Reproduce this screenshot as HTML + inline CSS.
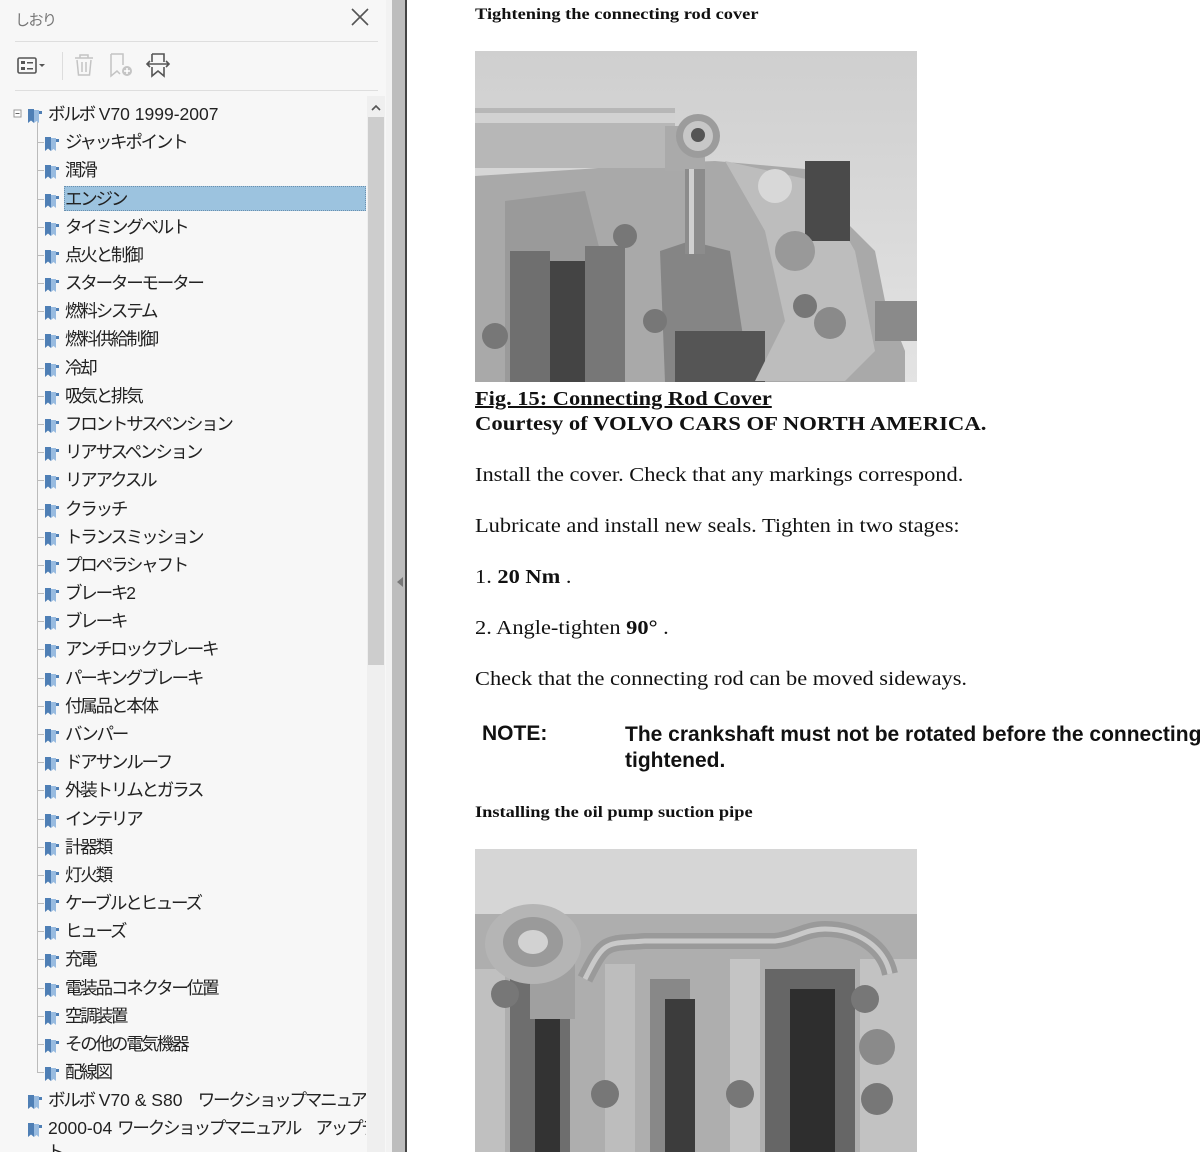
<!DOCTYPE html>
<html><head><meta charset="utf-8">
<style>
*{margin:0;padding:0;box-sizing:border-box}
html,body{width:1200px;height:1152px;overflow:hidden;background:#fff}
body{position:relative;font-family:"Liberation Sans","Noto Sans CJK JP",sans-serif}
#side{position:absolute;left:0;top:0;width:386px;height:1152px;background:#f7f7f7;overflow:hidden}
#tree{position:absolute;left:0;top:0;width:366px;height:1152px;overflow:hidden}
.ttl{position:absolute;left:15px;top:9px;font-size:15px;color:#777;letter-spacing:-1.5px}
.x{position:absolute;left:349px;top:6px}
.hr{position:absolute;left:15px;width:363px;height:1px;background:#dedede}
.row{position:absolute;height:28px;line-height:28px;font-size:17.5px;letter-spacing:-2.2px;color:#222;white-space:nowrap}
.row .lat{letter-spacing:0}
.bi{position:absolute;top:5px}
.sel{position:absolute;left:64px;top:186px;width:302px;height:25px;background:#9cc3df;border:1px dotted #6a8fae}
#sb{position:absolute;left:367px;top:96px;width:18px;height:1056px;background:#efefef}
#thumb{position:absolute;left:368px;top:117px;width:16px;height:548px;background:#cdcdcd}
#div1{position:absolute;left:386px;top:0;width:6px;height:1152px;background:#f2f2f2}
#div2{position:absolute;left:392px;top:0;width:13px;height:1152px;background:#bdbdbd}
#div3{position:absolute;left:405px;top:0;width:2px;height:1152px;background:#444}
.t{position:absolute;font-family:"Liberation Serif",serif;color:#111;white-space:nowrap;transform-origin:0 0;transform:scaleX(1.12)}
</style></head><body>
<div id="side">
<div class="ttl">しおり</div>
<svg class="x" width="22" height="22" viewBox="0 0 22 22"><path d="M3 3L19 19M19 3L3 19" stroke="#555" stroke-width="1.6"/></svg>
<div class="hr" style="top:41px"></div>
<div class="hr" style="top:90px"></div>
<svg style="position:absolute;left:14px;top:50px" width="170" height="32" viewBox="0 0 170 32">
<rect x="4" y="8" width="18" height="15" rx="1.5" fill="none" stroke="#555" stroke-width="1.6"/>
<rect x="7" y="11" width="4" height="3" fill="#555"/><rect x="7" y="17" width="4" height="3" fill="#555"/>
<rect x="13" y="12" width="6" height="1.5" fill="#555"/><rect x="13" y="18" width="6" height="1.5" fill="#555"/>
<path d="M25 14l3 3 3-3z" fill="#555"/>
<rect x="48" y="2" width="1" height="28" fill="#ddd"/>
<path d="M61 8h18M66 8V5h8v3M63 10l1.5 15h11l1.5-15M68 12v10M72 12v10" fill="none" stroke="#c4c4c4" stroke-width="1.5"/>
<path d="M97 4h12v11M97 4v22l6-5 3 3" fill="none" stroke="#c4c4c4" stroke-width="1.5"/>
<circle cx="113" cy="21" r="5" fill="#c4c4c4"/><path d="M113 18v6M110 21h6" stroke="#fff" stroke-width="1.5"/>
<path d="M138 4h12v8M138 4v8M138 17v9l6-5 6 5v-9" fill="none" stroke="#555" stroke-width="1.6"/>
<path d="M133 14h22M136 11l-3 3 3 3M152 11l3 3-3 3" fill="none" stroke="#555" stroke-width="1.6"/>
</svg>
<svg style="position:absolute;left:0;top:96px" width="70" height="1000">
<rect x="14" y="14" width="7" height="7" fill="#fff" stroke="#999"/><path d="M15.5 17.5h4" stroke="#666"/>
<path d="M37.5 26V976" stroke="#bbb"/>
</svg>
<div class="sel"></div>
<div id="tree"></div>
<div id="sb"></div>
<svg style="position:absolute;left:370px;top:103px" width="12" height="10"><path d="M2 7l4-4 4 4" fill="none" stroke="#555" stroke-width="1.6"/></svg>
<div id="thumb"></div>
</div>
<div id="div1"></div><div id="div2"></div><div id="div3"></div>
<svg style="position:absolute;left:396px;top:576px" width="8" height="12"><path d="M7 1L1 6l6 5z" fill="#777"/></svg>

<div class="t" style="left:475px;top:6px;font-size:16px;font-weight:bold;transform:scaleX(1.15)">Tightening the connecting rod cover</div>
<svg style="position:absolute;left:475px;top:51px" width="442" height="331" viewBox="0 0 442 331">
<defs><linearGradient id="g1" x1="0" y1="0" x2="0" y2="1"><stop offset="0" stop-color="#cfcfcf"/><stop offset="1" stop-color="#e3e3e3"/></linearGradient></defs>
<rect width="442" height="331" fill="url(#g1)"/>
<path d="M0 125L110 118 190 112 240 110 330 118 350 150 400 200 410 250 430 300 430 331H0z" fill="#a9a9a9"/>
<path d="M30 150L110 140 150 300 120 331H30z" fill="#9a9a9a"/>
<path d="M35 200h40v131H35z" fill="#6f6f6f"/><path d="M110 195h40v136h-40z" fill="#777"/>
<path d="M185 200l30-10 40 10 20 131H190z" fill="#858585"/>
<path d="M75 210h35v121H75z" fill="#444"/>
<path d="M200 280h90v51h-90z" fill="#555"/>
<path d="M250 110l90 20 40 70 20 100-30 30h-90l30-60-20-90z" fill="#bdbdbd"/>
<rect x="0" y="57" width="200" height="60" fill="#b7b7b7"/>
<rect x="0" y="62" width="200" height="10" fill="#d2d2d2"/>
<path d="M190 75h40v45h-40z" fill="#aaa"/>
<circle cx="223" cy="85" r="22" fill="#9c9c9c"/><circle cx="223" cy="85" r="15" fill="#c7c7c7"/><circle cx="223" cy="84" r="7" fill="#555"/>
<rect x="210" y="118" width="20" height="85" fill="#8c8c8c"/><rect x="214" y="118" width="5" height="85" fill="#d0d0d0"/>
<path d="M330 110h45v80h-45z" fill="#4a4a4a"/>
<circle cx="300" cy="135" r="17" fill="#d8d8d8"/><circle cx="320" cy="200" r="20" fill="#999"/>
<circle cx="355" cy="272" r="16" fill="#8a8a8a"/><circle cx="330" cy="255" r="12" fill="#777"/>
<circle cx="150" cy="185" r="12" fill="#777"/><circle cx="180" cy="270" r="12" fill="#777"/><circle cx="20" cy="285" r="13" fill="#777"/>
<path d="M400 250h42v40h-42z" fill="#8a8a8a"/>
</svg>
<div class="t" style="left:475px;top:388px;font-size:20px;font-weight:bold;text-decoration:underline">Fig. 15: Connecting Rod Cover</div>
<div class="t" style="left:475px;top:413px;font-size:20px;font-weight:bold;transform:scaleX(1.135)">Courtesy of VOLVO CARS OF NORTH AMERICA.</div>
<div class="t" style="left:475px;top:464px;font-size:20px">Install the cover. Check that any markings correspond.</div>
<div class="t" style="left:475px;top:515px;font-size:20px">Lubricate and install new seals. Tighten in two stages:</div>
<div class="t" style="left:475px;top:566px;font-size:20px">1. <b>20 Nm</b> .</div>
<div class="t" style="left:475px;top:617px;font-size:20px">2. Angle-tighten <b>90°</b> .</div>
<div class="t" style="left:475px;top:668px;font-size:20px">Check that the connecting rod can be moved sideways.</div>
<div class="t" style="left:482px;top:722px;font-size:21px;font-weight:bold;font-family:'Liberation Sans',sans-serif;transform:none">NOTE:</div>
<div class="t" style="left:625px;top:722px;font-size:21px;font-weight:bold;font-family:'Liberation Sans',sans-serif;line-height:26px;transform:none">The crankshaft must not be rotated before the connecting rod cover is<br>tightened.</div>
<div class="t" style="left:475px;top:804px;font-size:16px;font-weight:bold;transform:scaleX(1.15)">Installing the oil pump suction pipe</div>
<svg style="position:absolute;left:475px;top:849px" width="442" height="303" viewBox="0 0 442 303">
<rect width="442" height="303" fill="#d6d6d6"/>
<path d="M0 65H442V303H0z" fill="#aeaeae"/>
<path d="M35 130h60v173H35z" fill="#6e6e6e"/><path d="M60 150h25v153H60z" fill="#333"/>
<path d="M175 130h40v173h-40z" fill="#888"/><path d="M190 150h30v153h-30z" fill="#3c3c3c"/>
<path d="M290 120h90v183h-90z" fill="#666"/><path d="M315 140h45v163h-45z" fill="#2e2e2e"/>
<path d="M255 110h30v193h-30z" fill="#c4c4c4"/>
<path d="M130 115h30v188h-30z" fill="#bdbdbd"/>
<path d="M0 120h30v183H0z" fill="#c0c0c0"/><path d="M385 110h57v193h-57z" fill="#c2c2c2"/>
<circle cx="402" cy="198" r="18" fill="#8a8a8a"/><circle cx="402" cy="250" r="16" fill="#777"/>
<circle cx="30" cy="145" r="14" fill="#777"/><circle cx="130" cy="245" r="14" fill="#777"/><circle cx="265" cy="245" r="14" fill="#777"/><circle cx="390" cy="150" r="14" fill="#777"/>
<path d="M110 130C130 90 130 95 170 92H300C320 90 330 80 350 80 385 80 410 100 415 125" fill="none" stroke="#9a9a9a" stroke-width="16"/>
<path d="M110 130C130 90 130 95 170 92H300C320 90 330 80 350 80 385 80 410 100 415 125" fill="none" stroke="#c9c9c9" stroke-width="5"/>
<rect x="55" y="100" width="45" height="70" fill="#a0a0a0"/>
<ellipse cx="58" cy="95" rx="48" ry="40" fill="#b5b5b5"/><ellipse cx="58" cy="93" rx="30" ry="25" fill="#9a9a9a"/><ellipse cx="58" cy="93" rx="15" ry="12" fill="#d2d2d2"/>
</svg>
<script>
var items=["ジャッキポイント","潤滑","エンジン","タイミングベルト","点火と制御","スターターモーター","燃料システム","燃料供給制御","冷却","吸気と排気","フロントサスペンション","リアサスペンション","リアアクスル","クラッチ","トランスミッション","プロペラシャフト","ブレーキ2","ブレーキ","アンチロックブレーキ","パーキングブレーキ","付属品と本体","バンパー","ドアサンルーフ","外装トリムとガラス","インテリア","計器類","灯火類","ケーブルとヒューズ","ヒューズ","充電","電装品コネクター位置","空調装置","その他の電気機器","配線図"];
var icon='<svg width="16" height="17" viewBox="0 0 16 17"><path d="M1 1h6v14l-3-2.5L1 15z" fill="#4f7fb5"/><path d="M7 2h5v13l-2.5-2L7 15z" fill="#98bbe0"/><path d="M12 3h3v3h-3z" fill="#4f7fb5"/></svg>';
var h="",dy=28.18;
function row(x,y,t){h+='<div class="row" style="left:'+x+'px;top:'+(y-14)+'px"><span class="bi" style="left:0">'+icon+'</span><span style="position:absolute;left:21px">'+t+'</span></div>';}
row(27,114,"ボルボ<span class='lat'>&nbsp;V70 1999-2007</span>");
for(var i=0;i<items.length;i++){var y=114+dy*(i+1);row(44,y,items[i]);h+='<div style="position:absolute;left:37px;top:'+Math.round(y)+'px;width:7px;height:1px;background:#bbb"></div>';}
row(27,1100,"ボルボ<span class='lat'>&nbsp;V70 &amp; S80</span>　ワークショップマニュアル");
row(27,1128,"<span class='lat'>2000-04&nbsp;</span>ワークショップマニュアル　アップデー");
h+='<div class="row" style="left:47px;top:1138px">ト</div>';
document.getElementById("tree").innerHTML=h;
</script>
</body></html>
